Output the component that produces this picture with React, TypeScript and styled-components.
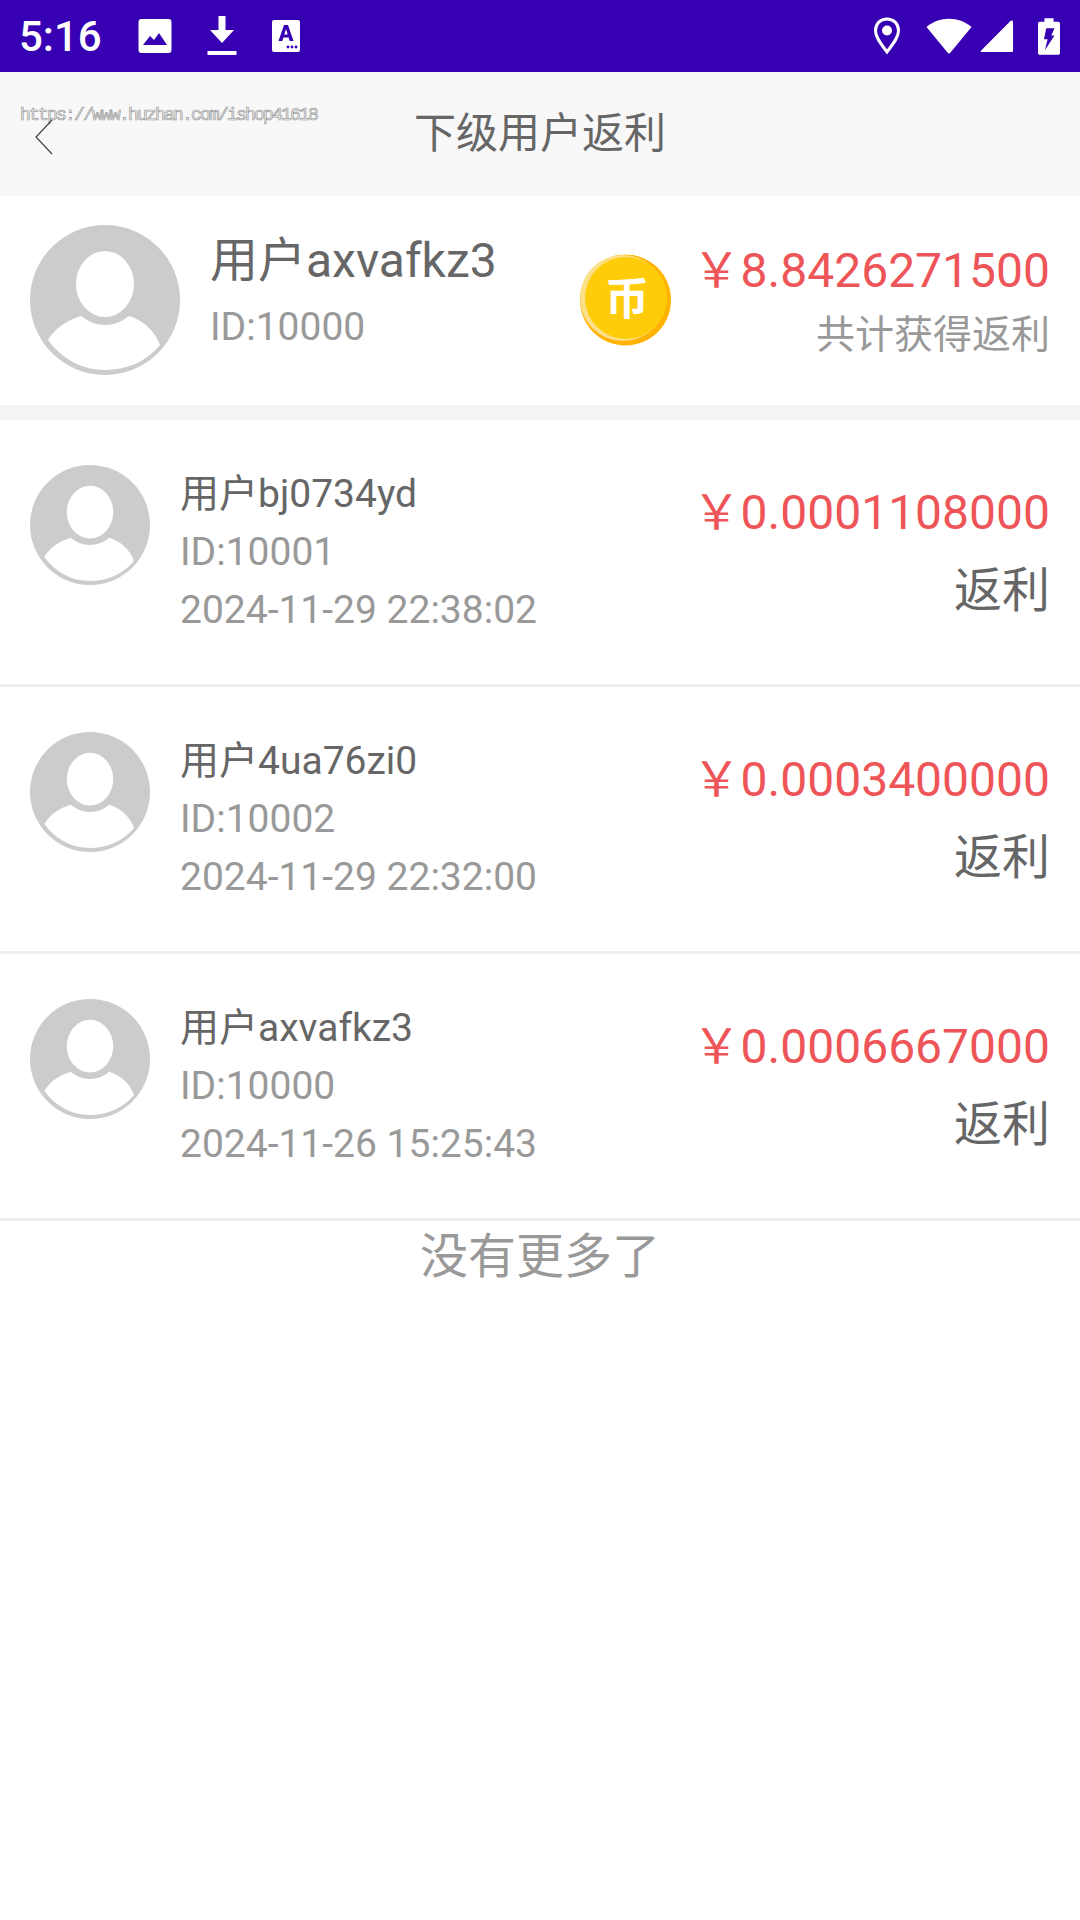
import React from 'react';
import styled, { createGlobalStyle } from 'styled-components';

const GlobalStyle = createGlobalStyle`
    *, *::before, *::after {
        box-sizing: border-box;
    }
    html, body {
        margin: 0;
        padding: 0;
        background: #fff;
    }
    body {
        font-family: Roboto, "Noto Sans CJK SC", sans-serif;
    }
`;

const Page = styled.div`
    width: 1080px;
    height: 1920px;
    background: #fff;
    overflow: hidden;
`;

const StatusBar = styled.div`
    height: 72px;
    background: #3700b3;
    display: flex;
    align-items: center;
    padding: 0 20px 0 19px;
    color: #fff;
`;

const Clock = styled.span`
    font-size: 42px;
    font-weight: 500;
    width: 119px;
`;

const StatusLeft = styled.div`
    display: flex;
    align-items: center;
    gap: 35px;
    flex: 1;
`;

const StatusRight = styled.div`
    display: flex;
    align-items: center;
`;

const Header = styled.div`
    position: relative;
    height: 124px;
    background: #f8f8f8;
    display: flex;
    align-items: center;
    justify-content: center;
    padding-bottom: 10px;
`;

const Title = styled.h1`
    margin: 0;
    font-size: 42px;
    font-weight: 400;
    color: #666;
`;

const BackButton = styled.div`
    position: absolute;
    left: 34px;
    top: 47px;
    width: 20px;
    height: 36px;
`;

const Watermark = styled.span`
    position: absolute;
    left: 20px;
    top: 33px;
    font-family: "Liberation Mono", monospace;
    font-size: 18px;
    letter-spacing: -1.8px;
    color: #f4f4f4;
    -webkit-text-stroke: 0.7px #9a9a9a;
    white-space: nowrap;
`;

const SummaryCard = styled.div`
    height: 224px;
    display: flex;
    align-items: center;
    padding: 0 30px 3px;
    border-bottom: 15px solid #f5f5f5;
`;

const SummaryInfo = styled.div`
    flex: 1;
    margin-left: 30px;
    margin-top: -14px;
`;

const SummaryName = styled.div`
    font-size: 48px;
    line-height: 64px;
    margin-bottom: 5px;
    color: #666;
`;

const IdLine = styled.div`
    font-size: 39px;
    line-height: 58px;
    color: #999;
`;

const Coin = styled.svg`
    width: 91px;
    height: 92px;
    margin: 2px 22px 0 0;
    flex: none;
`;

const SummaryRight = styled.div`
    text-align: right;
    margin-top: 8px;
`;

const Amount = styled.div`
    font-size: 48px;
    line-height: 64px;
    color: #ee5558;
`;

const SummaryLabel = styled.div`
    font-size: 39px;
    line-height: 64px;
    color: #999;
`;

const Row = styled.div`
    height: 267px;
    display: flex;
    padding: 43px 30px 0;
    border-bottom: 3px solid #eeeeee;
`;

const RowInfo = styled.div`
    flex: 1;
    margin-left: 30px;
    padding-top: 2px;
`;

const RowName = styled.div`
    font-size: 39px;
    line-height: 58px;
    color: #666;
`;

const RowRight = styled.div`
    text-align: right;
    margin-top: 18px;
`;

const RowTag = styled.div`
    font-size: 48px;
    line-height: 64px;
    margin-top: 14px;
    color: #666;
`;

const NoMore = styled.div`
    text-align: center;
    font-size: 48px;
    line-height: 72px;
    color: #999;
`;

const AvatarSvg = styled.svg<{ $size: number }>`
    width: ${p => p.$size}px;
    height: ${p => p.$size}px;
    flex: none;
    margin-top: 2px;
`;

const Avatar = ({ size }: { size: number }) => (
    <AvatarSvg $size={size} viewBox="0 0 150 150">
        <circle cx="75" cy="75" r="75" fill="#cccccc" />
        <ellipse cx="75" cy="59" rx="29" ry="33" fill="#fff" />
        <path
            d="M51 91 C59 97 66 100 75 100 C84 100 91 97 99 91 C113 95 125 106 130 120 C116 137 96 145 75 145 C52 145 32 134 18 115 C24 104 37 95 51 91 Z"
            fill="#fff"
        />
    </AvatarSvg>
);

const rows = [
    { name: '用户bj0734yd', id: 10001, time: '2024-11-29 22:38:02', amount: '0.0001108000' },
    { name: '用户4ua76zi0', id: 10002, time: '2024-11-29 22:32:00', amount: '0.0003400000' },
    { name: '用户axvafkz3', id: 10000, time: '2024-11-26 15:25:43', amount: '0.0006667000' },
];

const App = () => {
    return (
        <Page>
            <GlobalStyle />
            <StatusBar>
                <Clock>5:16</Clock>
                <StatusLeft>
                    <svg width="34" height="36" viewBox="0 0 34 36">
                        <rect x="0.5" y="1" width="33" height="34" rx="3" fill="#fff" />
                        <path d="M5 27 L12 18 L16 22 L21 15 L29 27 Z" fill="#3700b3" />
                    </svg>
                    <svg width="30" height="42" viewBox="0 0 30 42">
                        <path d="M11.5 1 H18.5 V15 H27 L15 28 L3 15 H11.5 Z" fill="#fff" />
                        <rect x="0.5" y="36" width="29" height="4" fill="#fff" />
                    </svg>
                    <svg width="28" height="32" viewBox="0 0 28 32">
                        <rect width="28" height="32" rx="2" fill="#fff" />
                        <path d="M6.5 21 L12 5 H16 L21.5 21 H17.7 L16.6 17.5 H11.4 L10.3 21 Z M12.3 14.5 H15.7 L14 9 Z" fill="#3700b3" fillRule="evenodd" />
                        <circle cx="16" cy="27" r="1.4" fill="#3700b3" />
                        <circle cx="20" cy="27" r="1.4" fill="#3700b3" />
                        <circle cx="24" cy="27" r="1.4" fill="#3700b3" />
                    </svg>
                </StatusLeft>
                <StatusRight>
                    <svg width="28" height="38" viewBox="0 0 28 38" style={{ marginRight: 25 }}>
                        <path d="M14 35 C9 28 2.5 21 2.5 13.5 C2.5 6.5 7.5 2 14 2 C20.5 2 25.5 6.5 25.5 13.5 C25.5 21 19 28 14 35 Z" fill="none" stroke="#fff" strokeWidth="3" />
                        <circle cx="14" cy="13.5" r="5" fill="#fff" />
                    </svg>
                    <svg width="46" height="38" viewBox="0 0 46 38" style={{ marginRight: 8 }}>
                        <path d="M0.5 10 C13 -1 33 -1 45.5 10 L24.5 35.5 C23.5 36.7 22.5 36.7 21.5 35.5 Z" fill="#fff" />
                    </svg>
                    <svg width="34" height="34" viewBox="0 0 36 36" style={{ marginRight: 24 }}>
                        <path d="M1.5 33 L32 2.5 C33.5 1 35 1.5 35 3.5 V33 C35 34.5 34.5 35 33 35 H2.5 C0.5 35 0 34.5 1.5 33 Z" fill="#fff" />
                    </svg>
                    <svg width="22" height="39" viewBox="0 0 24 40">
                        <path d="M7 0 H17 V4 H22 C23.2 4 24 4.8 24 6 V38 C24 39.2 23.2 40 22 40 H2 C0.8 40 0 39.2 0 38 V6 C0 4.8 0.8 4 2 4 H7 Z" fill="#fff" />
                        <path d="M9 11 H18 L14.5 19 H18 L7.5 35 L10.5 23 H6.5 Z" fill="#3700b3" />
                    </svg>
                </StatusRight>
            </StatusBar>

            <Header>
                <Watermark>https://www.huzhan.com/ishop41618</Watermark>
                <BackButton>
                    <svg width="20" height="36" viewBox="0 0 20 36">
                        <path d="M18 1 L2 18 L18 35" fill="none" stroke="#444" strokeWidth="1.2" />
                    </svg>
                </BackButton>
                <Title>下级用户返利</Title>
            </Header>

            <SummaryCard>
                <Avatar size={150} />
                <SummaryInfo>
                    <SummaryName>用户axvafkz3</SummaryName>
                    <IdLine>ID:10000</IdLine>
                </SummaryInfo>
                <Coin viewBox="0 0 91 92">
                    <circle cx="45.5" cy="46" r="45.5" fill="#ffb300" />
                    <circle cx="43" cy="44" r="43" fill="#fbe08a" />
                    <circle cx="46" cy="44" r="41" fill="#ffcc0a" />
                    <text x="47" y="61" textAnchor="middle" fontSize="44" fontWeight="700" fontFamily="'Noto Sans CJK SC', sans-serif" fill="#fff">币</text>
                </Coin>
                <SummaryRight>
                    <Amount>￥8.8426271500</Amount>
                    <SummaryLabel>共计获得返利</SummaryLabel>
                </SummaryRight>
            </SummaryCard>

            {rows.map(row => (
                <Row key={row.id + row.time}>
                    <Avatar size={120} />
                    <RowInfo>
                        <RowName>{row.name}</RowName>
                        <IdLine>ID:{row.id}</IdLine>
                        <IdLine>{row.time}</IdLine>
                    </RowInfo>
                    <RowRight>
                        <Amount>￥{row.amount}</Amount>
                        <RowTag>返利</RowTag>
                    </RowRight>
                </Row>
            ))}

            <NoMore>没有更多了</NoMore>
        </Page>
    );
};

export default App;
